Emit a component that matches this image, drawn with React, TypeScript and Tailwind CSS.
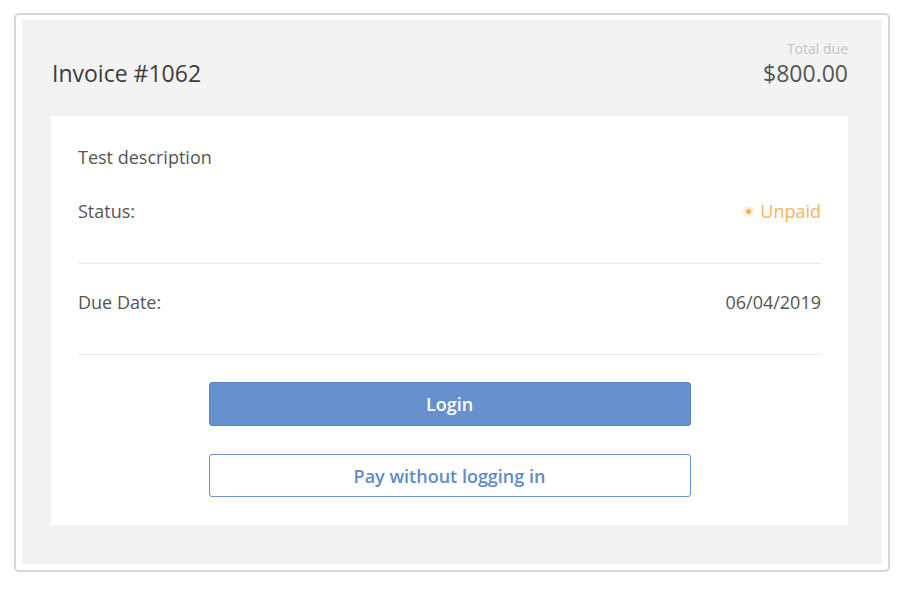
const App = () => {
	return (
		<div className="w-[906px] h-[592px] bg-white pt-[13px] pl-[14px] font-['Open_Sans',sans-serif]">
			<div className="w-[876px] border-2 border-[#d7d7d7] rounded-[5px] pt-[5px] pb-[6px] px-[6px]">
				<div className="bg-[#f3f3f3] pl-[29px] pr-[34px] pt-[20px] pb-[39px]">
					<div className="flex justify-between items-end mb-[28px]">
						<h1 className="text-[23px] leading-[30px] text-[#3d3d3d] pl-px">Invoice #1062</h1>
						<div className="text-right">
							<p className="text-[14px] leading-[18px] text-[#c4c4c4]">Total due</p>
							<p className="text-[23px] leading-[30px] text-[#555]">$800.00</p>
						</div>
					</div>

					<div className="bg-white px-[27px] pt-[29px] pb-[28px] text-[18px] leading-[24px] text-[#555]">
						<p>Test description</p>
						<div className="flex justify-between items-center pt-[30px] pb-[40px] border-b border-[#ebebeb]">
							<span>Status:</span>
							<span className="flex items-center gap-[6px] text-[#f2b56b]">
								<span className="flex items-center justify-center w-[11px] h-[11px] rounded-full bg-[#fdeed9]">
									<span className="w-[5px] h-[5px] rounded-full bg-[#f5b154]"></span>
								</span>
								Unpaid
							</span>
						</div>
						<div className="flex justify-between items-center pt-[26px] pb-[40px] border-b border-[#ebebeb]">
							<span>Due Date:</span>
							<span>06/04/2019</span>
						</div>
						<div className="flex flex-col items-center pt-[27px] gap-[28px]">
							<button className="w-[482px] h-[44px] rounded-[3px] bg-[#6690ce] border border-[#5a84c4] text-white font-semibold text-[18px]">
								Login
							</button>
							<button className="w-[482px] h-[43px] rounded-[3px] bg-white border border-[#6a93d0] text-[#5f8acb] font-semibold text-[18px]">
								Pay without logging in
							</button>
						</div>
					</div>
				</div>
			</div>
		</div>
	);
};

export default App;
